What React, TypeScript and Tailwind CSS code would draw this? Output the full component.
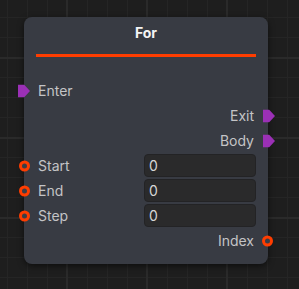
import React from 'react';

type Port = 'exec' | 'data' | null;

interface Row {
  label: string;
  side: 'in' | 'out';
  port: Port;
  field?: string;
}

const rows: Row[] = [
  { label: 'Enter', side: 'in', port: 'exec' },
  { label: 'Exit', side: 'out', port: 'exec' },
  { label: 'Body', side: 'out', port: 'exec' },
  { label: 'Start', side: 'in', port: 'data', field: '0' },
  { label: 'End', side: 'in', port: 'data', field: '0' },
  { label: 'Step', side: 'in', port: 'data', field: '0' },
  { label: 'Index', side: 'out', port: 'data' },
];

function ExecPin({ className }: { className: string }) {
  return (
    <svg width="12" height="13" viewBox="0 0 12 13" className={className}>
      <path d="M0 0H6L12 6.5L6 13H0Z" fill="#9b30b6" />
    </svg>
  );
}

function DataPin({ className }: { className: string }) {
  return (
    <div
      className={`absolute top-1/2 -translate-y-1/2 w-[11px] h-[11px] rounded-full border-[3px] border-[#ff3d00] bg-[#3b3e47] ${className}`}
    />
  );
}

function NodeRow({ row }: { row: Row }) {
  const isIn = row.side === 'in';
  return (
    <div className={`relative h-[25px] flex items-center px-[14px] ${isIn ? 'justify-between' : 'justify-end'}`}>
      {row.port === 'exec' && (
        <ExecPin className={`absolute top-1/2 -translate-y-1/2 ${isIn ? 'left-[-6px]' : 'right-[-7px]'}`} />
      )}
      {row.port === 'data' && <DataPin className={isIn ? 'left-[-5px]' : 'right-[-5px]'} />}
      <span className="text-[14px] text-[#c4c4c6]">{row.label}</span>
      {row.field !== undefined && (
        <div className="w-[112px] h-[23px] mr-[-2px] flex items-center px-1 rounded-[4px] bg-[#2a2a2b] border border-[#232325] text-[14px] text-[#d6d6d6]">
          {row.field}
        </div>
      )}
    </div>
  );
}

export default function App() {
  return (
    <div
      className="w-[299px] h-[289px] overflow-hidden pt-[17px] pl-6 bg-[#1e1e1e] bg-[linear-gradient(#2a2a2a_2px,transparent_2px),linear-gradient(90deg,#2a2a2a_2px,transparent_2px),linear-gradient(#252525_1px,transparent_1px),linear-gradient(90deg,#252525_1px,transparent_1px)] bg-[size:80px_80px,80px_80px,20px_20px,20px_20px] bg-[position:0_57px,66px_0,0_17px,7px_0]"
      style={{ fontFamily: 'Inter, "Noto Sans", sans-serif' }}
    >
      <div className="w-[244px] h-[247px] rounded-[8px] bg-[#383b43] shadow-[0_2px_6px_rgba(0,0,0,0.55)] flex flex-col">
        {/* Header */}
        <div className="pt-[6px] px-3">
          <div className="text-center text-[14px] leading-5 font-bold text-[#f4f4f4]">For</div>
          <div className="mt-[11px] h-[3px] bg-[#ff3d00]" />
        </div>

        {/* Ports */}
        <div className="mt-[21px] flex flex-col">
          {rows.map((row) => (
            <NodeRow key={row.label} row={row} />
          ))}
        </div>
      </div>
    </div>
  );
}
